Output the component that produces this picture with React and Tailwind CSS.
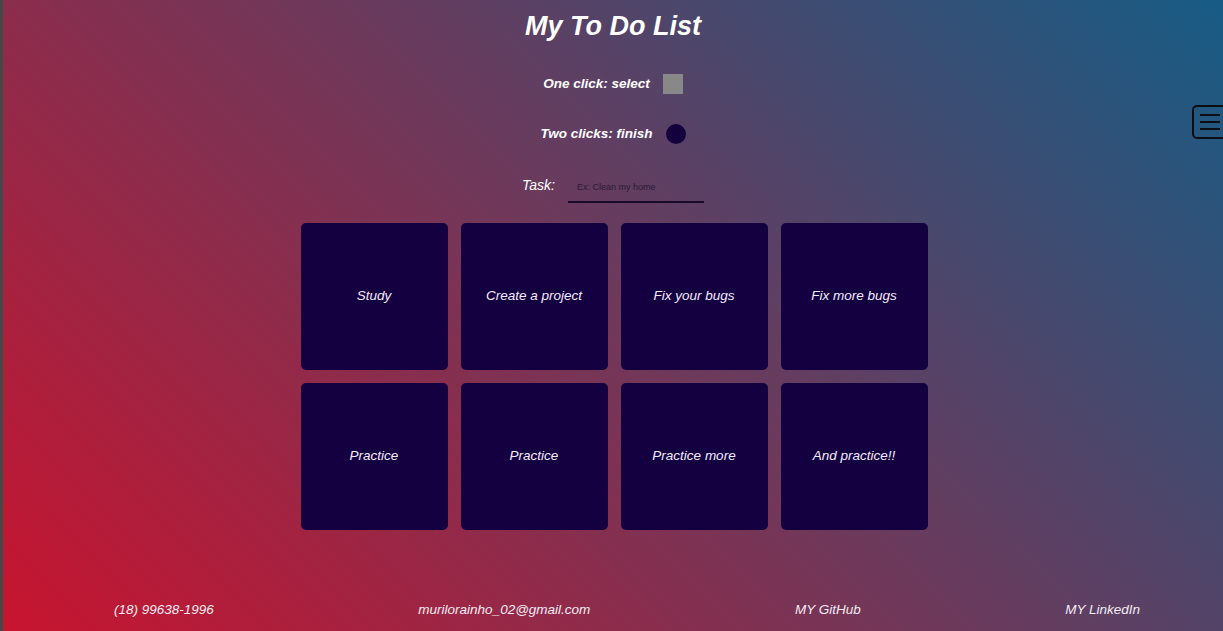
import React from 'react';

const tasks = ['Study', 'Create a project', 'Fix your bugs', 'Fix more bugs', 'Practice', 'Practice', 'Practice more', 'And practice!!'];

const App = () => {
  return (
    <div className="flex h-[631px] w-full overflow-hidden font-['Liberation_Sans',Arial,sans-serif] text-white">
      <div className="w-[3px] shrink-0 bg-[#474747]" />
      <div className="relative flex flex-1 flex-col items-center bg-[linear-gradient(45deg,#c8142f,#175c85)]">
        <h1 className="mt-[10px] text-[27px] font-bold italic leading-[32px]">My To Do List</h1>

        <div className="mt-[32px] flex items-center gap-[13px]">
          <span className="text-[13.5px] font-bold italic">One click: select</span>
          <div className="h-[20px] w-[20px] bg-[#888888]" />
        </div>

        <div className="mt-[30px] flex items-center gap-[13px]">
          <span className="text-[13.5px] font-bold italic">Two clicks: finish</span>
          <div className="h-[20px] w-[20px] rounded-full bg-[#14003c]" />
        </div>

        <div className="mt-[32px] flex items-start gap-[13px]">
          <span className="text-[14px] italic leading-[16px]">Task:</span>
          <input
            className="h-[26px] w-[136px] border-b-2 border-[#1a0a2a] bg-transparent px-[9px] pb-[4px] text-[9px] text-[#1a0a2a] outline-none placeholder:text-[#2a1a35]"
            placeholder="Ex: Clean my home"
          />
        </div>

        <div className="mt-[20px] ml-[2px] grid grid-cols-[repeat(4,147px)] gap-[13px]">
          {tasks.map((t, i) => (
            <div key={i} className="flex h-[147px] items-center justify-center rounded-[5px] bg-[#140040] text-[13.5px] italic text-[#f2ecf8]">
              {t}
            </div>
          ))}
        </div>

        <div className="mt-auto mb-[11px] flex w-full items-center justify-between pl-[111px] pr-[83px] text-[13.5px] italic text-[#f2ecf4]">
          <span>(18) 99638-1996</span>
          <span>murilorainho_02@gmail.com</span>
          <span>MY GitHub</span>
          <span>MY LinkedIn</span>
        </div>

        {/* menu toggle, partly off screen */}
        <div className="absolute right-[-12px] top-[105px] flex h-[34px] w-[43px] flex-col justify-center gap-[5px] rounded-[5px] border-2 border-[#0d0d14] pl-[6px]">
          <div className="h-[2px] w-[20px] bg-[#0d0d14]" />
          <div className="h-[2px] w-[20px] bg-[#0d0d14]" />
          <div className="h-[2px] w-[20px] bg-[#0d0d14]" />
        </div>
      </div>
    </div>
  );
};

export default App;
